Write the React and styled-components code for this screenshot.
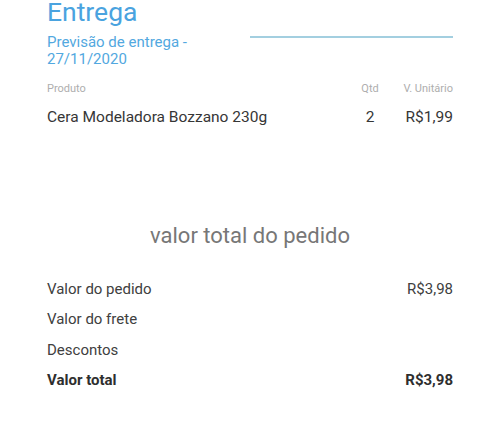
import React from 'react';
import styled, { createGlobalStyle } from 'styled-components';

const GlobalStyle = createGlobalStyle`
  body {
    margin: 0;
    background: #fff;
    font-family: Roboto, 'Noto Sans', sans-serif;
  }
`;

const Page = styled.div`
  width: 500px;
  height: 440px;
  padding: 0 47px;
  box-sizing: border-box;
  overflow: hidden;
  background: #fff;
`;

const Header = styled.div`
  display: flex;
  align-items: flex-start;
`;

const HeaderLeft = styled.div`
  width: 50%;
`;

const Title = styled.h1`
  margin: 0;
  font-size: 26.5px;
  line-height: 24px;
  font-weight: 400;
  color: #4aa3df;
`;

const Subtitle = styled.div`
  margin-top: 10px;
  font-size: 15px;
  line-height: 17px;
  color: #52a8e0;
`;

const Underline = styled.div`
  flex: 1;
  height: 36px;
  border-bottom: 2px solid #a3cfe0;
`;

const ItemGrid = styled.div`
  display: grid;
  grid-template-columns: 1fr 40px 63px;
  margin-top: 14px;
`;

const HeadCell = styled.div`
  font-size: 11px;
  line-height: 13px;
  color: #aeaeae;
  text-align: ${(p) => p.align || 'left'};
`;

const Cell = styled.div`
  margin-top: 11.5px;
  font-size: 15.5px;
  line-height: 20px;
  color: #363636;
  text-align: ${(p) => p.align || 'left'};
`;

const TotalHeading = styled.h2`
  margin: 96px 0 0;
  font-size: 22px;
  line-height: 25px;
  font-weight: 400;
  color: #777;
  text-align: center;
`;

const Summary = styled.div`
  margin-top: 26px;
`;

const SummaryRow = styled.div`
  display: flex;
  justify-content: space-between;
  font-size: 15px;
  line-height: 30.5px;
  color: ${(p) => (p.strong ? '#2e2e2e' : '#404040')};
  font-weight: ${(p) => (p.strong ? 700 : 400)};
`;

const items = [{ name: 'Cera Modeladora Bozzano 230g', qty: 2, price: 'R$1,99' }];

const summary = [
  { label: 'Valor do pedido', value: 'R$3,98' },
  { label: 'Valor do frete', value: '' },
  { label: 'Descontos', value: '' },
  { label: 'Valor total', value: 'R$3,98', strong: true },
];

export default function App() {
  return (
    <Page>
      <GlobalStyle />
      <Header>
        <HeaderLeft>
          <Title>Entrega</Title>
          <Subtitle>Previsão de entrega - 27/11/2020</Subtitle>
        </HeaderLeft>
        <Underline />
      </Header>

      <ItemGrid>
        <HeadCell>Produto</HeadCell>
        <HeadCell align="center">Qtd</HeadCell>
        <HeadCell align="right">V. Unitário</HeadCell>
        {items.map((item) => (
          <React.Fragment key={item.name}>
            <Cell>{item.name}</Cell>
            <Cell align="center">{item.qty}</Cell>
            <Cell align="right">{item.price}</Cell>
          </React.Fragment>
        ))}
      </ItemGrid>

      <TotalHeading>valor total do pedido</TotalHeading>

      <Summary>
        {summary.map((row) => (
          <SummaryRow key={row.label} strong={row.strong}>
            <span>{row.label}</span>
            <span>{row.value}</span>
          </SummaryRow>
        ))}
      </Summary>
    </Page>
  );
}
